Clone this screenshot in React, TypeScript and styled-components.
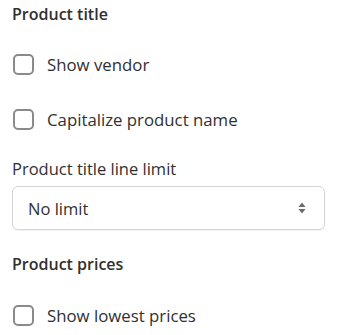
import React from "react";
import styled, { createGlobalStyle } from "styled-components";

const Global = createGlobalStyle`
  html, body { margin: 0; padding: 0; background: #ffffff; }
  body { font-family: "Open Sans", "Noto Sans", sans-serif; color: #303030; }
`;

const Panel = styled.div`
  width: 340px;
  padding: 3px 15px 0 12px;
  box-sizing: border-box;
  display: flex;
  flex-direction: column;
`;

const Heading = styled.div<{ $gap?: number }>`
  font-size: 16px;
  font-weight: 600;
  line-height: 22px;
  color: #303030;
  margin-top: ${(p) => p.$gap ?? 0}px;
`;

const CheckRow = styled.label<{ $gap: number }>`
  display: flex;
  align-items: center;
  gap: 13px;
  height: 22px;
  margin-top: ${(p) => p.$gap}px;
  font-size: 16.8px;
  color: #303030;
`;

const Box = styled.span`
  width: 17px;
  height: 17px;
  margin-left: 1px;
  border: 2px solid #8a8a8a;
  border-radius: 5px;
  flex-shrink: 0;
`;

const FieldLabel = styled.div`
  margin-top: 28px;
  font-size: 16.5px;
  line-height: 22px;
  color: #303030;
`;

const Select = styled.div`
  margin-top: 6px;
  height: 44px;
  box-sizing: border-box;
  border: 1px solid #d4d4d4;
  border-radius: 6px;
  display: flex;
  align-items: center;
  justify-content: space-between;
  padding: 0 18px 0 15px;
  font-size: 16.5px;
  color: #303030;
  box-shadow: 0 1px 1px rgba(0,0,0,0.06);
`;

const Checkbox = ({ label, gap }: { label: string; gap: number }) => (
  <CheckRow $gap={gap}>
    <Box />
    <span>{label}</span>
  </CheckRow>
);

export default function App() {
  return (
    <>
      <Global />
      <Panel>
        <Heading>Product title</Heading>
        <Checkbox label="Show vendor" gap={28} />
        <Checkbox label="Capitalize product name" gap={33} />
        <FieldLabel>Product title line limit</FieldLabel>
        <Select>
          <span>No limit</span>
          <svg width="8" height="12" viewBox="0 0 8 12">
            <path d="M4 0.5 L7.5 5 H0.5 Z" fill="#6b6b6b" />
            <path d="M4 11.5 L7.5 7 H0.5 Z" fill="#6b6b6b" />
          </svg>
        </Select>
        <Heading $gap={23}>Product prices</Heading>
        <Checkbox label="Show lowest prices" gap={29} />
      </Panel>
    </>
  );
}
